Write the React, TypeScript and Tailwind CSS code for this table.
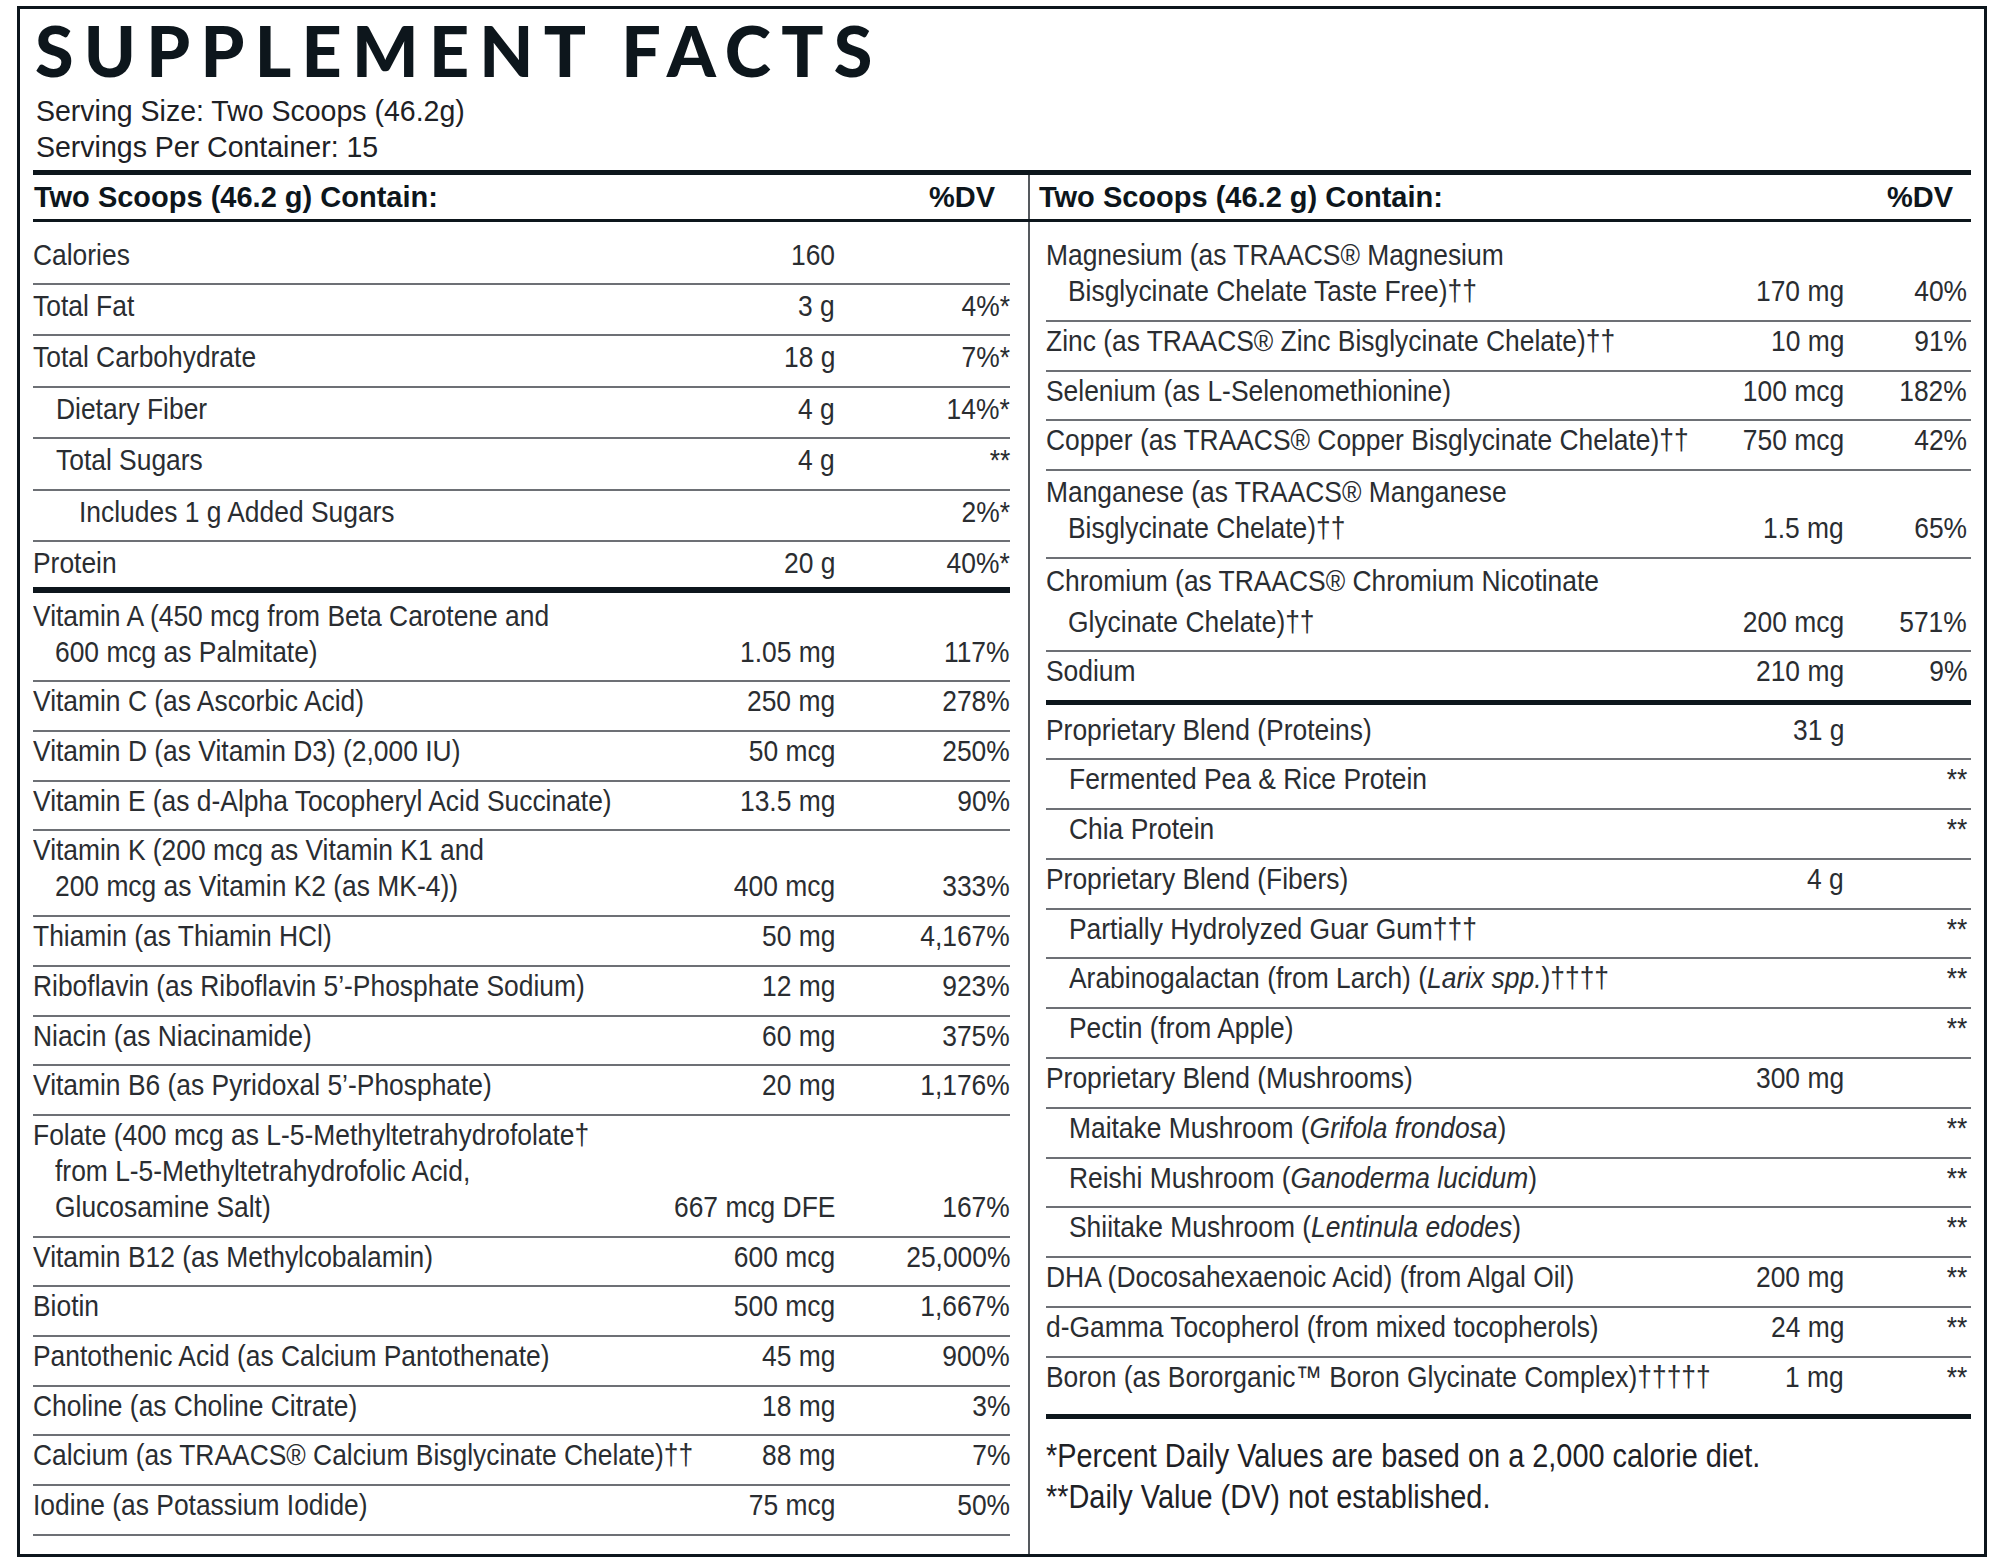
import React from "react";

type RowDef = {
  lines: React.ReactNode[];
  indent?: 0 | 1 | 2;
  amt?: string;
  dv?: string;
  pad: string;
  border?: "thin" | "thick6" | "thick5" | "none";
  lead?: string;
};

function T({ children, right }: { children?: React.ReactNode; right?: boolean }) {
  return (
    <span
      className={
        right
          ? "inline-block whitespace-nowrap origin-right scale-x-[0.88]"
          : "inline-block whitespace-nowrap origin-left scale-x-[0.88]"
      }
    >
      {children}
    </span>
  );
}

function Row({ r, amtW, dvW }: { r: RowDef; amtW: string; dvW: string }) {
  const lead = r.lead ?? "leading-[36px]";
  const indentCls = r.indent === 2 ? "pl-[46px]" : r.indent === 1 ? "pl-[23px]" : "pl-0";
  const border =
    r.border === "thick6"
      ? "border-b-[6px] border-[#0d161c]"
      : r.border === "thick5"
      ? "border-b-[5px] border-[#0d161c]"
      : r.border === "none"
      ? ""
      : "border-b-2 border-[#6d7075]";
  return (
    <div className={`flex items-end min-w-0 ${r.pad} ${border} ${lead}`}>
      <div className={`flex-1 min-w-0 ${indentCls}`}>
        {r.lines.map((l, i) => (
          <div key={i} className={i > 0 ? "pl-[22px]" : ""}>
            <T>{l}</T>
          </div>
        ))}
      </div>
      <div className={`${amtW} shrink-0 text-right`}>
        <T right>{r.amt}</T>
      </div>
      <div className={`${dvW} shrink-0 text-right`}>
        <T right>{r.dv}</T>
      </div>
    </div>
  );
}

const TOP = "pt-[3px] pb-[10.5px]";
const STD = "pt-[1px] pb-[10.7px]";
const STDR = "pt-[1px] pb-[10.8px]";
const D2 = "\u2020\u2020";
const D3 = "\u2020\u2020\u2020";
const D4 = "\u2020\u2020\u2020\u2020";
const D5 = "\u2020\u2020\u2020\u2020\u2020";

const leftRows: RowDef[] = [
  { lines: ["Calories"], amt: "160", dv: "", pad: "pt-[15.5px] pb-[9.5px]" },
  { lines: ["Total Fat"], amt: "3 g", dv: "4%*", pad: TOP },
  { lines: ["Total Carbohydrate"], amt: "18 g", dv: "7%*", pad: TOP },
  { lines: ["Dietary Fiber"], indent: 1, amt: "4 g", dv: "14%*", pad: TOP },
  { lines: ["Total Sugars"], indent: 1, amt: "4 g", dv: "**", pad: TOP },
  { lines: ["Includes 1 g Added Sugars"], indent: 2, amt: "", dv: "2%*", pad: TOP },
  { lines: ["Protein"], amt: "20 g", dv: "40%*", pad: "pt-[3px] pb-[6px]", border: "thick6" },
  {
    lines: ["Vitamin A (450 mcg from Beta Carotene and", "600 mcg as Palmitate)"],
    amt: "1.05 mg",
    dv: "117%",
    pad: "pt-[4.3px] pb-[10.7px]",
  },
  { lines: ["Vitamin C (as Ascorbic Acid)"], amt: "250 mg", dv: "278%", pad: STD },
  { lines: ["Vitamin D (as Vitamin D3) (2,000 IU)"], amt: "50 mcg", dv: "250%", pad: STD },
  { lines: ["Vitamin E (as d-Alpha Tocopheryl Acid Succinate)"], amt: "13.5 mg", dv: "90%", pad: STD },
  {
    lines: ["Vitamin K (200 mcg as Vitamin K1 and", "200 mcg as Vitamin K2 (as MK-4))"],
    amt: "400 mcg",
    dv: "333%",
    pad: STD,
  },
  { lines: ["Thiamin (as Thiamin HCl)"], amt: "50 mg", dv: "4,167%", pad: STD },
  { lines: ["Riboflavin (as Riboflavin 5\u2019-Phosphate Sodium)"], amt: "12 mg", dv: "923%", pad: STD },
  { lines: ["Niacin (as Niacinamide)"], amt: "60 mg", dv: "375%", pad: STD },
  { lines: ["Vitamin B6 (as Pyridoxal 5\u2019-Phosphate)"], amt: "20 mg", dv: "1,176%", pad: STD },
  {
    lines: [
      "Folate (400 mcg as L-5-Methyltetrahydrofolate\u2020",
      "from L-5-Methyltetrahydrofolic Acid,",
      "Glucosamine Salt)",
    ],
    amt: "667 mcg DFE",
    dv: "167%",
    pad: STD,
  },
  { lines: ["Vitamin B12 (as Methylcobalamin)"], amt: "600 mcg", dv: "25,000%", pad: STD },
  { lines: ["Biotin"], amt: "500 mcg", dv: "1,667%", pad: STD },
  { lines: ["Pantothenic Acid (as Calcium Pantothenate)"], amt: "45 mg", dv: "900%", pad: STD },
  { lines: ["Choline (as Choline Citrate)"], amt: "18 mg", dv: "3%", pad: STD },
  {
    lines: ["Calcium (as TRAACS\u00ae Calcium Bisglycinate Chelate)" + D2],
    amt: "88 mg",
    dv: "7%",
    pad: STD,
  },
  { lines: ["Iodine (as Potassium Iodide)"], amt: "75 mcg", dv: "50%", pad: STD },
];

const rightRows: RowDef[] = [
  {
    lines: ["Magnesium (as TRAACS\u00ae Magnesium", "Bisglycinate Chelate Taste Free)" + D2],
    amt: "170 mg",
    dv: "40%",
    pad: "pt-[15.5px] pb-[10.5px]",
  },
  { lines: ["Zinc (as TRAACS\u00ae Zinc Bisglycinate Chelate)" + D2], amt: "10 mg", dv: "91%", pad: STD },
  { lines: ["Selenium (as L-Selenomethionine)"], amt: "100 mcg", dv: "182%", pad: STD },
  {
    lines: ["Copper (as TRAACS\u00ae Copper Bisglycinate Chelate)" + D2],
    amt: "750 mcg",
    dv: "42%",
    pad: STD,
  },
  {
    lines: ["Manganese (as TRAACS\u00ae Manganese", "Bisglycinate Chelate)" + D2],
    amt: "1.5 mg",
    dv: "65%",
    pad: "pt-[3.5px] pb-[10.5px]",
  },
  {
    lines: ["Chromium (as TRAACS\u00ae Chromium Nicotinate", "Glycinate Chelate)" + D2],
    amt: "200 mcg",
    dv: "571%",
    pad: "pt-[1.1px] pb-[8.4px]",
    lead: "leading-[41px]",
  },
  { lines: ["Sodium"], amt: "210 mg", dv: "9%", pad: "pt-[0.5px] pb-[11px]", border: "thick5" },
  { lines: ["Proprietary Blend (Proteins)"], amt: "31 g", dv: "", pad: "pt-[6.7px] pb-[10.5px]" },
  { lines: ["Fermented Pea & Rice Protein"], indent: 1, amt: "", dv: "**", pad: STDR },
  { lines: ["Chia Protein"], indent: 1, amt: "", dv: "**", pad: STDR },
  { lines: ["Proprietary Blend (Fibers)"], amt: "4 g", dv: "", pad: STDR },
  { lines: ["Partially Hydrolyzed Guar Gum" + D3], indent: 1, amt: "", dv: "**", pad: STDR },
  {
    lines: [
      <>
        {"Arabinogalactan (from Larch) ("}
        <i>Larix spp.</i>
        {")" + D4}
      </>,
    ],
    indent: 1,
    amt: "",
    dv: "**",
    pad: STDR,
  },
  { lines: ["Pectin (from Apple)"], indent: 1, amt: "", dv: "**", pad: STDR },
  { lines: ["Proprietary Blend (Mushrooms)"], amt: "300 mg", dv: "", pad: STDR },
  {
    lines: [
      <>
        {"Maitake Mushroom ("}
        <i>Grifola frondosa</i>
        {")"}
      </>,
    ],
    indent: 1,
    amt: "",
    dv: "**",
    pad: STDR,
  },
  {
    lines: [
      <>
        {"Reishi Mushroom ("}
        <i>Ganoderma lucidum</i>
        {")"}
      </>,
    ],
    indent: 1,
    amt: "",
    dv: "**",
    pad: STDR,
  },
  {
    lines: [
      <>
        {"Shiitake Mushroom ("}
        <i>Lentinula edodes</i>
        {")"}
      </>,
    ],
    indent: 1,
    amt: "",
    dv: "**",
    pad: STDR,
  },
  { lines: ["DHA (Docosahexaenoic Acid) (from Algal Oil)"], amt: "200 mg", dv: "**", pad: STDR },
  { lines: ["d-Gamma Tocopherol (from mixed tocopherols)"], amt: "24 mg", dv: "**", pad: STDR },
  {
    lines: ["Boron (as Bororganic\u2122 Boron Glycinate Complex)" + D5],
    amt: "1 mg",
    dv: "**",
    pad: "pt-[1px] pb-[19px]",
    border: "thick5",
  },
];

export default function App() {
  return (
    <div className="w-[2000px] h-[1564px] bg-white pt-[6px] pl-[17px] font-[family-name:Liberation_Sans,Arial,sans-serif] text-[#2a2d31]">
      <div className="w-[1970px] h-[1551px] border-[3px] border-[#0d161c] flex flex-col px-[13px] overflow-hidden">
        <div className="mt-[6px] h-[70px] pl-[2px] text-[70px] leading-[70px] font-black tracking-[0.147em] whitespace-nowrap font-[family-name:Lato,sans-serif] text-[#0d161c]">
          SUPPLEMENT FACTS
        </div>
        <div className="mt-[7.5px] pl-[3px] text-[30px] leading-[36px] text-[#1e2125]">
          <div>
            <span className="inline-block whitespace-nowrap origin-left scale-x-[0.95]">
              Serving Size: Two Scoops (46.2g)
            </span>
          </div>
          <div>
            <span className="inline-block whitespace-nowrap origin-left scale-x-[0.95]">
              Servings Per Container: 15
            </span>
          </div>
        </div>
        <div className="mt-[5.4px] h-[5px] shrink-0 bg-[#0d161c]" />
        <div className="flex h-[47px] shrink-0 border-b-[3px] border-[#0d161c] text-[29px] leading-[44px] font-bold text-[#0d161c]">
          <div className="w-[995px] shrink-0 flex justify-between pl-[1px] pr-[33px] whitespace-nowrap">
            <span>Two Scoops (46.2 g) Contain:</span>
            <span>%DV</span>
          </div>
          <div className="flex-1 min-w-0 flex justify-between border-l-2 border-[#55595e] pl-[9px] pr-[18px] whitespace-nowrap">
            <span>Two Scoops (46.2 g) Contain:</span>
            <span>%DV</span>
          </div>
        </div>
        <div className="flex flex-1 min-h-0 text-[30px]">
          <div className="w-[995px] shrink-0 pr-[18px] min-w-0">
            {leftRows.map((r, i) => (
              <Row key={i} r={r} amtW="w-[200px]" dvW="w-[175px]" />
            ))}
          </div>
          <div className="flex-1 min-w-0 border-l-2 border-[#55595e] pl-[16px]">
            {rightRows.map((r, i) => (
              <Row key={i} r={r} amtW="w-[140px]" dvW="w-[127px] pr-[4px]" />
            ))}
            <div className="mt-[16px] text-[34px] leading-[41px] text-[#1e2125]">
              <div>
                <span className="inline-block whitespace-nowrap origin-left scale-x-[0.85]">
                  *Percent Daily Values are based on a 2,000 calorie diet.
                </span>
              </div>
              <div>
                <span className="inline-block whitespace-nowrap origin-left scale-x-[0.85]">
                  **Daily Value (DV) not established.
                </span>
              </div>
            </div>
          </div>
        </div>
      </div>
    </div>
  );
}
